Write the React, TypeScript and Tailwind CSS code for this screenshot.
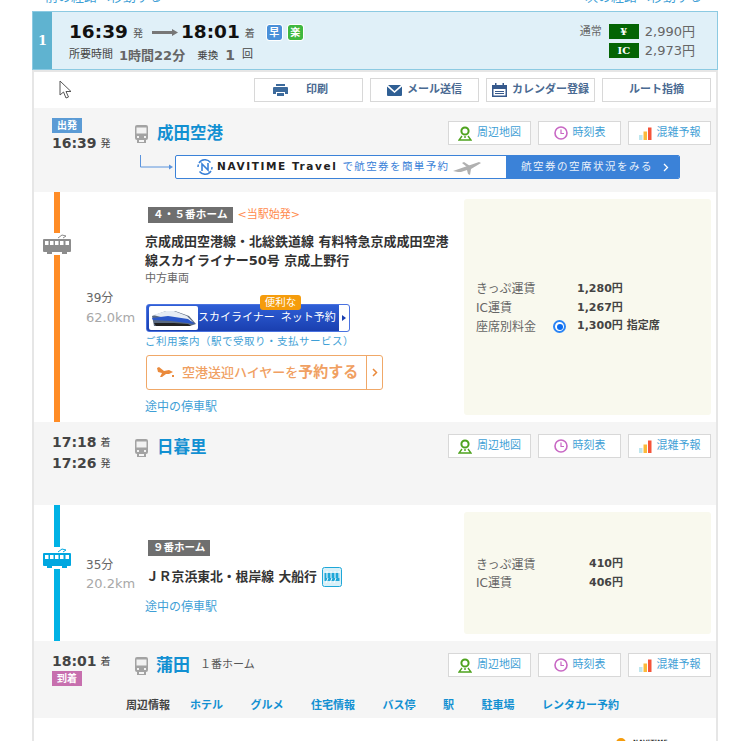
const font = { fontFamily: '"DejaVu Sans", "Noto Sans CJK JP", sans-serif' };

function StationIcon() {
    return (
        <svg width="15" height="19" viewBox="0 0 15 19" className="shrink-0">
            <path d="M3 1h9a2 2 0 0 1 2 2v11a2 2 0 0 1-2 2H3a2 2 0 0 1-2-2V3a2 2 0 0 1 2-2z" fill="#a3a3a3" />
            <rect x="2.5" y="3.5" width="10" height="6" fill="#f2f2f2" />
            <rect x="3" y="12" width="2" height="2" fill="#f2f2f2" />
            <rect x="10" y="12" width="2" height="2" fill="#f2f2f2" />
            <path d="M3 16h2v2h5v-2h2v3H3z" fill="#a3a3a3" />
        </svg>
    );
}

function TramIcon({ color, bg }: { color: string; bg: string }) {
    return (
        <svg width="30" height="22" viewBox="0 0 30 22" style={{ background: bg }} className="shrink-0">
            <path d="M16 5l4-3 4 1-3 2" fill="none" stroke={color} strokeWidth="1" />
            <path d="M2 6h26a1 1 0 0 1 1 1v11a1 1 0 0 1-1 1H2a1 1 0 0 1-1-1V7a1 1 0 0 1 1-1z" fill={color} />
            <g fill={bg}>
                <rect x="3" y="8" width="3.5" height="4" />
                <rect x="8" y="8" width="3.5" height="4" />
                <rect x="13" y="8" width="3.5" height="4" />
                <rect x="18" y="8" width="3.5" height="4" />
                <rect x="23.5" y="8" width="3.5" height="4" />
            </g>
            <rect x="5" y="19" width="5" height="2" fill={color} />
            <rect x="20" y="19" width="5" height="2" fill={color} />
        </svg>
    );
}

function PinIcon() {
    return (
        <svg width="14" height="15" viewBox="0 0 14 15" className="shrink-0">
            <circle cx="7" cy="5" r="3.6" fill="none" stroke="#4ea31e" strokeWidth="2" />
            <path d="M7 10v2M4 10L1 14h12l-3-4" fill="none" stroke="#4ea31e" strokeWidth="1.4" />
        </svg>
    );
}

function ClockIcon() {
    return (
        <svg width="14" height="14" viewBox="0 0 14 14" className="shrink-0">
            <circle cx="7" cy="7" r="6" fill="none" stroke="#c868c4" strokeWidth="1.6" />
            <path d="M7 3.5V7.5H10" fill="none" stroke="#c868c4" strokeWidth="1.2" />
        </svg>
    );
}

function BarsIcon() {
    return (
        <svg width="13" height="13" viewBox="0 0 13 13" className="shrink-0">
            <rect x="0" y="8" width="3.5" height="5" fill="#bde6ee" />
            <rect x="4.5" y="4.5" width="3.5" height="8.5" fill="#fbb93a" />
            <rect x="9" y="0.5" width="3.5" height="12.5" fill="#f5543a" />
        </svg>
    );
}

function StationButtons() {
    const cls = "flex h-6 w-[83px] items-center justify-center gap-[5px] border-[1.5px] border-[#d8d8d8] bg-white text-[11px] text-[#3f9fd6]";
    return (
        <div className="flex gap-[7px]">
            <div className={cls}><PinIcon />周辺地図</div>
            <div className={cls}><ClockIcon />時刻表</div>
            <div className={cls}><BarsIcon />混雑予報</div>
        </div>
    );
}

function ToolButton({ children }: { children: React.ReactNode }) {
    return (
        <div className="flex h-6 w-[109px] items-center justify-center gap-[5px] border-[1.5px] border-[#d8d8d8] bg-white text-[11px] font-bold text-[#4a6a92]">
            {children}
        </div>
    );
}

function FareRow({ label, amount, extra, radio, col }: { label: string; amount: string; extra?: string; radio?: boolean; col: string }) {
    return (
        <div className={`grid ${col} h-[18.7px] items-center`}>
            <div className="text-[12px] text-[#666]">{label}</div>
            {col.includes("77px") && (
                <div className="flex items-center">
                    {radio && <span className="block h-[13px] w-[13px] rounded-full border-2 border-[#2b85f5] bg-white p-[1.5px]"><span className="block h-full w-full rounded-full bg-[#0a6cf0]" /></span>}
                </div>
            )}
            <div className="text-[11px] font-bold text-[#444]">
                {amount}
                {extra && <span className="ml-[4px]">{extra}</span>}
            </div>
        </div>
    );
}

export default function App() {
    return (
        <div className="h-[741px] overflow-hidden bg-white" style={font}>
            {/* 上の切れたリンク */}
            <div className="flex h-[11px] items-end justify-between overflow-hidden pl-[45px] pr-[48px] text-[13px] leading-[13px] text-[#3f9fd6]">
                <div className="translate-y-[-8px]">前の経路へ移動する</div>
                <div className="translate-y-[-8px]">次の経路へ移動する</div>
            </div>

            {/* 経路ヘッダー */}
            <div className="ml-[32px] flex h-[59px] w-[686px] border border-[#8ccae2] bg-[#e0f0f8]">
                <div className="flex w-[19px] items-center justify-center bg-[#5fb3d0] text-[13px] font-bold text-white" style={{ fontFamily: '"DejaVu Serif", serif' }}>1</div>
                <div className="flex-1 pl-[17px] pt-[8px]">
                    <div className="flex h-[24px] items-center text-[#111]">
                        <span className="text-[18.5px] font-bold">16:39</span>
                        <span className="ml-[5px] mt-[3px] text-[10px] text-[#555]">発</span>
                        <svg width="26" height="7" viewBox="0 0 26 7" className="ml-[9px] mr-[3px]">
                            <path d="M0 2h20V0l6 3.500-6 3.500V5H0z" fill="#777" />
                        </svg>
                        <span className="text-[18.5px] font-bold">18:01</span>
                        <span className="ml-[5px] mt-[3px] text-[10px] text-[#555]">着</span>
                        <span className="ml-[12px] flex h-[15px] w-[15px] items-center justify-center rounded-[2px] bg-[#4a90d9] text-[10px] font-bold text-white outline outline-white">早</span>
                        <span className="ml-[6px] flex h-[15px] w-[15px] items-center justify-center rounded-[2px] bg-[#3fb83f] text-[10px] font-bold text-white outline outline-white">楽</span>
                    </div>
                    <div className="mt-[1px] flex items-center text-[#444]">
                        <span className="text-[11px]">所要時間</span>
                        <span className="ml-[6px] text-[13px] font-bold text-[#666]">1時間22分</span>
                        <span className="ml-[12px] text-[10.5px]">乗換</span>
                        <span className="ml-[7px] text-[14px] font-bold text-[#666]">1</span>
                        <span className="ml-[7px] text-[11px]">回</span>
                    </div>
                </div>
                <div className="flex flex-col gap-[4px] pr-[22px] pt-[12px]">
                    <div className="flex h-[15px] items-center">
                        <span className="mr-[7px] mt-[1px] text-[11px] text-[#666]">通常</span>
                        <span className="flex h-[15px] w-[30px] items-center justify-center bg-[#046404] text-[10px] font-bold text-white" style={{ fontFamily: '"DejaVu Serif", serif' }}>¥</span>
                        <span className="ml-[6px] text-[13px] text-[#666]">2,990円</span>
                    </div>
                    <div className="flex h-[15px] items-center justify-end">
                        <span className="flex h-[15px] w-[30px] items-center justify-center bg-[#046404] text-[10px] font-bold text-white" style={{ fontFamily: '"DejaVu Serif", serif' }}>IC</span>
                        <span className="ml-[6px] text-[13px] text-[#666]">2,973円</span>
                    </div>
                </div>
            </div>

            {/* 詳細 */}
            <div className="ml-[32px] w-[686px] border-2 border-b-0 border-[#e6e6e6]">
                <div className="flex h-[36px] items-center justify-between pl-[25px] pr-[5px]">
                    <svg width="13" height="19" viewBox="0 0 13 19" className="mb-[2px]">
                        <path d="M1 1v14l3.5-3 2.5 6 2.500-1-2.500-5.500H12z" fill="#fff" stroke="#555" strokeWidth="1" />
                    </svg>
                    <div className="flex gap-[7px]">
                        <ToolButton>
                            <svg width="15" height="12" viewBox="0 0 15 12" className="mr-[13px]">
                                <path d="M3 0h9v2H3zM1 3h13a1 1 0 0 1 1 1v6h-3V8H3v2H0V4a1 1 0 0 1 1-1zM4 9h7v3H4z" fill="#3c6a9c" />
                            </svg>
                            <span className="mr-[16px]">印刷</span>
                        </ToolButton>
                        <ToolButton>
                            <svg width="15" height="11" viewBox="0 0 15 11">
                                <path d="M1 0h13L7.500 6zM0 1.500l7.500 6.500L15 1.500V10a1 1 0 0 1-1 1H1a1 1 0 0 1-1-1z" fill="#2f5f94" />
                            </svg>
                            メール送信
                        </ToolButton>
                        <ToolButton>
                            <svg width="15" height="14" viewBox="0 0 15 14">
                                <path d="M0 2h3V0h1.500v2h6V0H12v2h3v12H0zm1.500 4v6.500h12V6z" fill="#36598c" />
                                <path d="M3 8h9v1H3zM3 10h9v1H3z" fill="#36598c" />
                            </svg>
                            カレンダー登録
                        </ToolButton>
                        <ToolButton>ルート指摘</ToolButton>
                    </div>
                </div>

                {/* 成田空港 */}
                <div className="h-[84px] bg-[#f5f5f5]">
                    <div className="flex h-[47px] pr-[5px]">
                        <div className="w-[100px] pl-[18px] pt-[10px]">
                            <div className="flex h-[15px] w-[30px] items-center justify-center bg-[#5b9bd5] text-[10px] font-bold text-white">出発</div>
                            <div className="flex h-[20px] items-center text-[14px] font-bold leading-none text-[#444]">16:39<span className="ml-[4px] mt-[2px] text-[10px] font-normal">発</span></div>
                        </div>
                        <div className="flex flex-1 items-start gap-[8px] pt-[16px]">
                            <StationIcon />
                            <span className="text-[16.500px] font-bold leading-[19px] text-[#1290d2]">成田空港</span>
                        </div>
                        <div className="pt-[13px]"><StationButtons /></div>
                    </div>
                    <div className="flex items-start pl-[106px]">
                        <svg width="34" height="17" viewBox="0 0 34 17" className="mt-0 shrink-0">
                            <path d="M0.500 0v12H30" fill="none" stroke="#5b94dd" strokeWidth="1" />
                            <path d="M29 9.500l4 2.500-4 2.500z" fill="#5b94dd" />
                        </svg>
                        <div className="ml-[1px] flex h-[24px] w-[505px] overflow-hidden rounded-[2px] border border-[#3b82d8] bg-white">
                            <div className="flex w-[330px] items-center pl-[21px] text-[#3b82d8]">
                                <svg width="16" height="16" viewBox="0 0 16 16" className="shrink-0">
                                    <path d="M13.500 3.500A7 7 0 0 0 2 4M2.500 12.500A7 7 0 0 0 14 12" fill="none" stroke="#3b82d8" strokeWidth="1.500" />
                                    <path d="M1 8a7 7 0 0 1 .5-2.500M15 8a7 7 0 0 1-.5 2.500" fill="none" stroke="#3b82d8" strokeWidth="1.500" />
                                    <path d="M5 12V5l6 6V4" fill="none" stroke="#3b82d8" strokeWidth="1.600" />
                                </svg>
                                <span className="ml-[4px] whitespace-nowrap text-[10.5px] font-bold tracking-[1.6px] text-[#222]">NAVITIME Travel</span>
                                <span className="ml-[5px] whitespace-nowrap text-[10.5px] tracking-[1.4px]">で航空券を簡単予約</span>
                                <svg width="28" height="15" viewBox="0 0 28 15" className="ml-[3px] shrink-0">
                                    <path d="M0 11l26-9 2 1-10 6-1 6-2-1-1-4-6 2-3 0z" fill="#b0b0b0" />
                                    <path d="M9 3l2-1 6 4-3 1z" fill="#b0b0b0" />
                                </svg>
                            </div>
                            <div className="flex flex-1 items-center whitespace-nowrap bg-[#3b82d8] pl-[15px] text-[10.5px] tracking-[1.500px] text-[#e8f0fa]">
                                航空券の空席状況をみる
                                <svg width="6" height="9" viewBox="0 0 6 9" className="ml-[10px]">
                                    <path d="M1 1l3.500 3.500L1 8" fill="none" stroke="#fff" strokeWidth="1.300" />
                                </svg>
                            </div>
                        </div>
                    </div>
                </div>

                {/* スカイライナー */}
                <div className="flex h-[230px]">
                    <div className="flex w-[46px] shrink-0 flex-col items-center">
                        <div className="h-[41px] w-[6px] bg-[#ff8c26]" />
                        <TramIcon color="#8c8c8c" bg="#ffffff" />
                        <div className="w-[6px] flex-1 bg-[#ff8c26]" />
                    </div>
                    <div className="w-[65px] shrink-0 pl-[6px] pt-[97px]">
                        <div className="text-[12px] leading-[19px] text-[#666]">39分</div>
                        <div className="text-[13px] leading-[19px] text-[#a8a8a8]">62.0km</div>
                    </div>
                    <div className="w-[319px] shrink-0 pt-[15px]">
                        <div className="flex h-[16px] items-center">
                            <span className="ml-[3px] flex h-[16px] items-center bg-[#6f6f6f] px-[5px] text-[10.5px] font-bold tracking-[0.2px] text-white">４・５番ホーム</span>
                            <span className="ml-[5px] text-[11px] text-[#ff8a4c]">&lt;当駅始発&gt;</span>
                        </div>
                        <div className="mt-[9px] w-[310px] text-[13px] font-bold leading-[19px] text-[#333]">京成成田空港線・北総鉄道線 有料特急京成成田空港線スカイライナー50号 京成上野行</div>
                        <div className="mt-[2px] text-[11px] leading-[14px] text-[#666]">中方車両</div>
                        <div className="relative ml-[1px] mt-[18px] flex h-[28px] w-[204px] items-stretch rounded-[3px] border border-[#4a72e0] bg-gradient-to-b from-[#2f5fd6] to-[#1a3fb0]">
                            <div className="my-[1px] ml-[2px] flex w-[49px] shrink-0 items-center justify-center rounded-[2px] bg-white">
                                <svg width="46" height="18" viewBox="0 0 46 18">
                                    <path d="M1 7L15 2h9l14 5 7 8-6 2H3z" fill="#5a6a80" />
                                    <path d="M2 6l13-4h8l13 5 6 6-15-4H14z" fill="#e6ecf4" />
                                    <path d="M1 9l16-2 20 3 7 5-24-3L2 11z" fill="#2b57c8" />
                                    <path d="M3 14l20 0 14 1 3 2H5z" fill="#222" />
                                </svg>
                            </div>
                            <div className="flex flex-1 items-center gap-[6px] whitespace-nowrap text-[11px] text-white">
                                <span>スカイライナー</span>
                                <span>ネット予約</span>
                            </div>
                            <div className="flex w-[10px] shrink-0 items-center justify-center rounded-r-[2px] bg-white">
                                <svg width="4" height="6" viewBox="0 0 4 6"><path d="M0 0l4 3-4 3z" fill="#1a3fb0" /></svg>
                            </div>
                            <div className="absolute left-[113px] top-[-10px] flex h-[15px] w-[41px] items-center justify-center rounded-[3px] bg-[#f59c0c] text-[10.5px] text-white">便利な</div>
                        </div>
                        <div className="mt-[2px] whitespace-nowrap text-[10.5px] leading-[15px] tracking-[0.5px] text-[#3f9fd6]">ご利用案内（駅で受取り・支払サービス）</div>
                        <div className="ml-[1px] mt-[6px] flex h-[35px] w-[237px] rounded-[3px] border border-[#f0a868] bg-white">
                            <div className="flex flex-1 items-center pl-[10px] text-[#f0a062]">
                                <svg width="17" height="11" viewBox="0 0 17 11" className="mr-[8px] shrink-0">
                                    <path d="M0 1l2-1 5 4 5-1 4 2-4 2-3 0-4 3-2 0 2-4-4-1zM15 8h2v2h-2z" fill="#ea8a3c" />
                                </svg>
                                <span className="whitespace-nowrap text-[13px] font-medium">空港送迎ハイヤーを</span><span className="whitespace-nowrap text-[15px] font-bold">予約する</span>
                            </div>
                            <div className="flex w-[16px] shrink-0 items-center justify-center border-l border-[#f0a868]">
                                <svg width="6" height="9" viewBox="0 0 6 9"><path d="M1 1l3.500 3.500L1 8" fill="none" stroke="#ea8a3c" strokeWidth="1.500" /></svg>
                            </div>
                        </div>
                        <div className="mt-[9px] text-[12px] leading-[16px] text-[#3f9fd6]">途中の停車駅</div>
                    </div>
                    <div className="my-[7px] mr-[5px] flex flex-1 flex-col justify-center rounded-[3px] bg-[#f9f9ee] pl-[12px] pt-[2px]">
                        <FareRow col="grid-cols-[77px_24px_1fr]" label="きっぷ運賃" amount="1,280円" />
                        <FareRow col="grid-cols-[77px_24px_1fr]" label="IC運賃" amount="1,267円" />
                        <FareRow col="grid-cols-[77px_24px_1fr]" label="座席別料金" amount="1,300円" extra="指定席" radio />
                    </div>
                </div>

                {/* 日暮里 */}
                <div className="flex h-[83px] bg-[#f5f5f5] pr-[5px]">
                    <div className="w-[100px] pl-[18px] pt-[9px] text-[14px] font-bold leading-none text-[#444]">
                        <div className="flex h-[21px] items-center">17:18<span className="ml-[4px] mt-[2px] text-[10px] font-normal">着</span></div>
                        <div className="flex h-[21px] items-center">17:26<span className="ml-[4px] mt-[2px] text-[10px] font-normal">発</span></div>
                    </div>
                    <div className="flex flex-1 items-start gap-[8px] pt-[16px]">
                        <StationIcon />
                        <span className="text-[16.500px] font-bold leading-[19px] text-[#1290d2]">日暮里</span>
                    </div>
                    <div className="pt-[12px]"><StationButtons /></div>
                </div>

                {/* 京浜東北線 */}
                <div className="flex h-[136px]">
                    <div className="flex w-[46px] shrink-0 flex-col items-center">
                        <div className="h-[42px] w-[6px] bg-[#00b2e5]" />
                        <TramIcon color="#00a7e0" bg="#ffffff" />
                        <div className="w-[6px] flex-1 bg-[#00b2e5]" />
                    </div>
                    <div className="w-[65px] shrink-0 pl-[6px] pt-[51px]">
                        <div className="text-[12px] leading-[18.500px] text-[#666]">35分</div>
                        <div className="text-[13px] leading-[18.500px] text-[#a8a8a8]">20.2km</div>
                    </div>
                    <div className="w-[319px] shrink-0 pt-[35px]">
                        <span className="ml-[3px] flex h-[16px] w-fit items-center bg-[#6f6f6f] px-[5px] text-[10.5px] font-bold text-white">９番ホーム</span>
                        <div className="ml-[1px] mt-[10px] flex h-[22px] items-center whitespace-nowrap text-[12.800px] font-bold text-[#333]">
                            ＪＲ京浜東北・根岸線 大船行
                            <svg width="20" height="20" viewBox="0 0 20 20" className="ml-[5px] shrink-0">
                                <rect x="0.500" y="0.500" width="19" height="19" rx="2" fill="#d8f0f8" stroke="#1ea7d8" />
                                <path d="M2.500 6h15v8h-15z" fill="#1ea7d8" />
                                <path d="M5 4v7M9 4v7M13 4v7M17 4v7M4 16l2-5M8 16l2-5M12 16l2-5" stroke="#fff" strokeWidth="1" />
                            </svg>
                        </div>
                        <div className="mt-[11px] text-[12px] leading-[16px] text-[#3f9fd6]">途中の停車駅</div>
                    </div>
                    <div className="my-[7px] mr-[5px] flex flex-1 flex-col justify-center rounded-[3px] bg-[#f9f9ee] pl-[12px] pt-[2px]">
                        <FareRow col="grid-cols-[113px_1fr]" label="きっぷ運賃" amount="410円" />
                        <FareRow col="grid-cols-[113px_1fr]" label="IC運賃" amount="406円" />
                    </div>
                </div>

                {/* 蒲田 */}
                <div className="h-[77px] bg-[#f5f5f5]">
                    <div className="flex h-[47px] pr-[5px]">
                        <div className="w-[100px] pl-[18px] pt-[10px]">
                            <div className="flex h-[20px] items-center text-[14px] font-bold leading-none text-[#444]">18:01<span className="ml-[4px] mt-[2px] text-[10px] font-normal">着</span></div>
                            <div className="flex h-[15px] w-[30px] items-center justify-center bg-[#c76fae] text-[10px] font-bold text-white">到着</div>
                        </div>
                        <div className="flex flex-1 items-start pt-[15px]">
                            <StationIcon />
                            <span className="ml-[7px] text-[17px] font-bold leading-[19px] text-[#1290d2]">蒲田</span>
                            <span className="ml-[10px] whitespace-nowrap text-[11px] leading-[17px] text-[#555]">１番ホーム</span>
                        </div>
                        <div className="pt-[12px]"><StationButtons /></div>
                    </div>
                    <div className="flex pl-[92px] pt-[10px] text-[11px] font-bold leading-[16px] text-[#1290d2]">
                        <span className="mr-[20px] text-[#444]">周辺情報</span>
                        <div className="flex gap-[27.500px]">
                            <span>ホテル</span>
                            <span>グルメ</span>
                            <span>住宅情報</span>
                            <span>バス停</span>
                            <span>駅</span>
                            <span>駐車場</span>
                            <span>レンタカー予約</span>
                        </div>
                    </div>
                </div>

                {/* 下のロゴ */}
                <div className="flex justify-end pr-[48px] pt-[20px]">
                    <span className="mr-[7px] block h-[10px] w-[10px] rounded-full bg-[#f59c0c]" />
                    <span className="text-[6px] font-bold leading-[8px] tracking-[0.300px] text-[#333]">NAVITIME</span>
                </div>
            </div>
        </div>
    );
}
